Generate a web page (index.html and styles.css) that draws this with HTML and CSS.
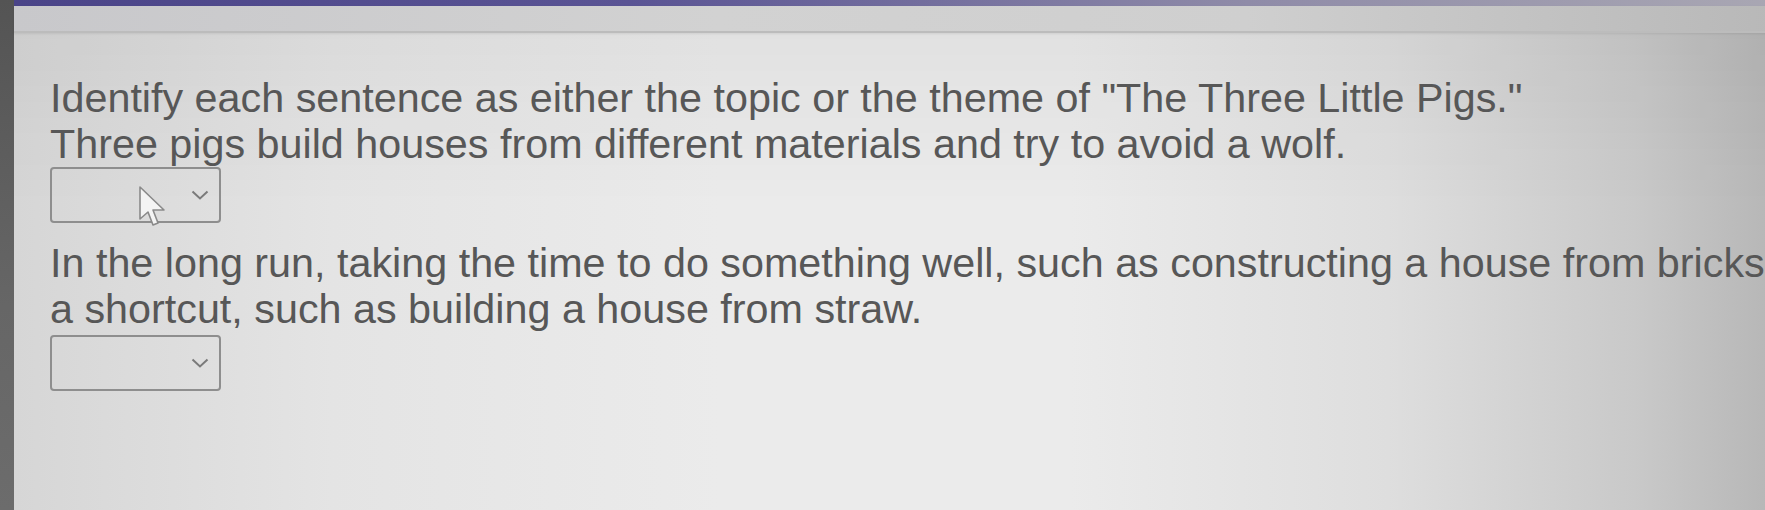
FILE: index.html
```html
<!DOCTYPE html>
<html lang="en">
<head>
    <meta charset="UTF-8">
    <meta name="viewport" content="width=device-width, initial-scale=1.0">
    <title>Topic or Theme</title>
    <link rel="stylesheet" href="styles.css">
</head>
<body>
    <div class="bezel"></div>

    <div class="screen">
        <header class="toolbar">
            <div class="toolbar-accent"></div>
            <div class="toolbar-strip"></div>
        </header>

        <main class="question">
            <p class="prompt">Identify each sentence as either the topic or the theme of "The Three Little Pigs."</p>

            <div class="item">
                <p class="sentence">Three pigs build houses from different materials and try to avoid a wolf.</p>
                <div class="select-wrap">
                    <div class="select">
                        <svg class="chevron" viewBox="0 0 18 10" width="18" height="10">
                            <path d="M1.5 1.5 L9 8.5 L16.5 1.5" fill="none" stroke="#7a7a7a" stroke-width="2"/>
                        </svg>
                    </div>
                    <!-- mouse pointer resting on the first box -->
                    <svg class="pointer" viewBox="0 0 30 46" width="30" height="46">
                        <path d="M2 2 L2 34 L10 27 L15 40 L20 38 L15 25 L26 25 Z" fill="#f4f4f4" stroke="#8a8a8a" stroke-width="1.6" stroke-linejoin="round"/>
                    </svg>
                </div>
            </div>

            <div class="item">
                <p class="sentence">In the long run, taking the time to do something well, such as constructing a house from bricks,<br>a shortcut, such as building a house from straw.</p>
                <div class="select-wrap">
                    <div class="select">
                        <svg class="chevron" viewBox="0 0 18 10" width="18" height="10">
                            <path d="M1.5 1.5 L9 8.5 L16.5 1.5" fill="none" stroke="#7a7a7a" stroke-width="2"/>
                        </svg>
                    </div>
                </div>
            </div>
        </main>
    </div>
</body>
</html>
```

FILE: styles.css
```css
html, body {
    height: 100%;
}

body {
    margin: 0;
    display: flex;
    overflow: hidden;
    font-family: 'Liberation Sans', Arial, sans-serif;
    color: #575757;
    background: #e2e2e2;
}

.bezel {
    width: 14px;
    flex-shrink: 0;
    background: linear-gradient(to bottom, #545454, #666 60%, #6c6c6c);
}

.screen {
    flex: 1;
    display: flex;
    flex-direction: column;
    background:
        linear-gradient(to bottom, rgba(0,0,0,0.05), rgba(0,0,0,0) 40%),
        linear-gradient(to right, #d6d6d6 0%, #e4e4e4 18%, #ebebeb 40%, #ebebeb 60%, #dedede 78%, #c9c9c9 92%, #b6b6b6 100%);
}

.toolbar-accent {
    height: 6px;
    background: linear-gradient(to right, #4a4488 0%, #5a5494 35%, #8f8ba8 70%, #a9a7b3 100%);
}

.toolbar-strip {
    height: 25px;
    background: linear-gradient(to right, #c8c8cb, #d2d2d2 40%, #cfcfcf 70%, #b8b8b8);
    border-bottom: 2px solid #bcbcbc;
    box-shadow: 0 1px 2px rgba(0,0,0,0.08);
}

.question {
    padding: 42px 0 0 36px;
    white-space: nowrap;
}

.prompt,
.sentence {
    margin: 0;
    font-size: 41.3px;
    line-height: 46px;
}

.item {
    display: flex;
    flex-direction: column;
    align-items: flex-start;
}

.item + .item {
    margin-top: 17px;
}

.select-wrap {
    position: relative;
}

.item:last-child .select-wrap {
    margin-top: 3px;
}

.select {
    width: 171px;
    height: 56px;
    box-sizing: border-box;
    border: 2px solid #8e8e8e;
    border-radius: 4px;
    display: flex;
    align-items: center;
    justify-content: flex-end;
    padding-right: 10px;
}

.chevron {
    display: block;
}

.pointer {
    position: absolute;
    left: 88px;
    top: 18px;
}
```
